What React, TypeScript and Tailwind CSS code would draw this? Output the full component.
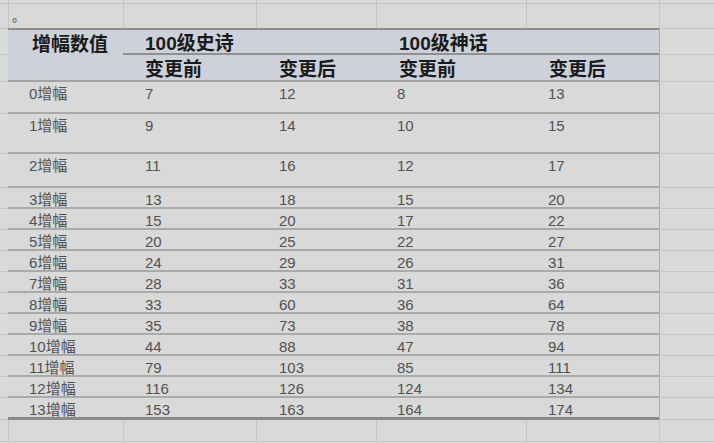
const FONT = "font-['Liberation_Sans','Noto_Sans_CJK_SC',sans-serif]"

const W = ['w-[115px]', 'w-[133px]', 'w-[120px]', 'w-[150px]', 'w-[133px]']
const PAD = ['pl-[21px]', 'pl-[22px]', 'pl-[23px]', 'pl-[21px]', 'pl-[22px]']

type Row = { cells: (string | number)[]; h: string }

const ROWS: Row[] = [
  { cells: ['0增幅', 7, 12, 8, 13], h: 'h-[32px]' },
  { cells: ['1增幅', 9, 14, 10, 15], h: 'h-[40px]' },
  { cells: ['2增幅', 11, 16, 12, 17], h: 'h-[34px]' },
  { cells: ['3增幅', 13, 18, 15, 20], h: 'h-[21px]' },
  { cells: ['4增幅', 15, 20, 17, 22], h: 'h-[21px]' },
  { cells: ['5增幅', 20, 25, 22, 27], h: 'h-[21px]' },
  { cells: ['6增幅', 24, 29, 26, 31], h: 'h-[21px]' },
  { cells: ['7增幅', 28, 33, 31, 36], h: 'h-[21px]' },
  { cells: ['8增幅', 33, 60, 36, 64], h: 'h-[21px]' },
  { cells: ['9增幅', 35, 73, 38, 78], h: 'h-[21px]' },
  { cells: ['10增幅', 44, 88, 47, 94], h: 'h-[21px]' },
  { cells: ['11增幅', 79, 103, 85, 111], h: 'h-[21px]' },
  { cells: ['12增幅', 116, 126, 124, 134], h: 'h-[21px]' },
  { cells: ['13增幅', 153, 163, 164, 174], h: 'h-[22px]' },
]

// plain spreadsheet row outside the table: only thin gridlines
function GridRow({ h }: { h: string }) {
  return (
    <div className={`flex ${h}`}>
      <div className="w-[8px] border-b border-[#c4c4c4]" />
      {W.map((w, i) => (
        <div key={i} className={`${w} border-b border-l border-[#c4c4c4]`} />
      ))}
      <div className="flex-1 border-b border-l border-[#c4c4c4]" />
    </div>
  )
}

export default function App() {
  return (
    <div className={`h-[443px] w-[714px] overflow-hidden bg-[#d9d9d9] ${FONT}`}>
      <GridRow h="h-[4px]" />
      <div className="flex h-[24px]">
        <div className="w-[8px]" />
        {W.map((w, i) => (
          <div key={i} className={`${w} border-l border-[#c4c4c4] ${i === 0 ? 'pl-[3px]' : ''}`}>
            {i === 0 && <span className="text-[13px] leading-[22px] text-[#444]">。</span>}
          </div>
        ))}
        <div className="flex-1 border-l border-[#c4c4c4]" />
      </div>

      {/* header */}
      <div className="flex h-[54px]">
        <div className="flex w-[8px] flex-col">
          <div className="h-[27px] border-t border-b border-[#c4c4c4]" />
          <div className="h-[27px] border-b border-[#c4c4c4]" />
        </div>
        <div className="h-[54px] w-[115px] border-t-2 border-b-2 border-t-[#8c8c8c] border-b-[#a3a3a3] bg-[#cdd1d9] pt-[4px] pl-[24px] text-[19px] leading-[22px] font-bold text-[#1a1a1a]">
          增幅数值
        </div>
        <div className="flex w-[536px] flex-col bg-[#cdd1d9] text-[19px] leading-[22px] font-bold text-[#1a1a1a]">
          <div className="flex h-[27px] border-t-2 border-t-[#8c8c8c]">
            <div className="w-[253px] border-b-2 border-[#909090] pt-[3px] pl-[22px]">100级史诗</div>
            <div className="w-[283px] border-b-2 border-[#909090] pt-[3px] pl-[23px]">100级神话</div>
          </div>
          <div className="flex h-[27px] border-b-2 border-[#a3a3a3]">
            <div className="w-[133px] pt-[4px] pl-[22px]">变更前</div>
            <div className="w-[120px] pt-[4px] pl-[23px]">变更后</div>
            <div className="w-[150px] pt-[4px] pl-[23px]">变更前</div>
            <div className="w-[133px] pt-[4px] pl-[23px]">变更后</div>
          </div>
        </div>
        <div className="flex flex-1 flex-col">
          <div className="h-[27px] border-t border-b border-l border-[#c4c4c4] border-l-[#acacac]" />
          <div className="h-[27px] border-b border-l border-[#c4c4c4] border-l-[#acacac]" />
        </div>
      </div>

      {/* body */}
      {ROWS.map((r, ri) => {
        const last = ri === ROWS.length - 1
        return (
          <div key={ri} className={`flex ${r.h}`}>
            <div className="w-[8px] border-b border-[#c4c4c4]" />
            {r.cells.map((c, i) => (
              <div
                key={i}
                className={`${W[i]} ${PAD[i]} ${last ? 'border-b-[3px] border-[#8a8a8a]' : 'border-b-2 border-[#aaaaaa]'} whitespace-nowrap pt-[2px] text-[15px] leading-5 text-[#525252]`}
              >
                {c}
              </div>
            ))}
            <div className="flex-1 border-b border-l border-[#c4c4c4] border-l-[#acacac]" />
          </div>
        )
      })}

      <GridRow h="h-[22px]" />
    </div>
  )
}
